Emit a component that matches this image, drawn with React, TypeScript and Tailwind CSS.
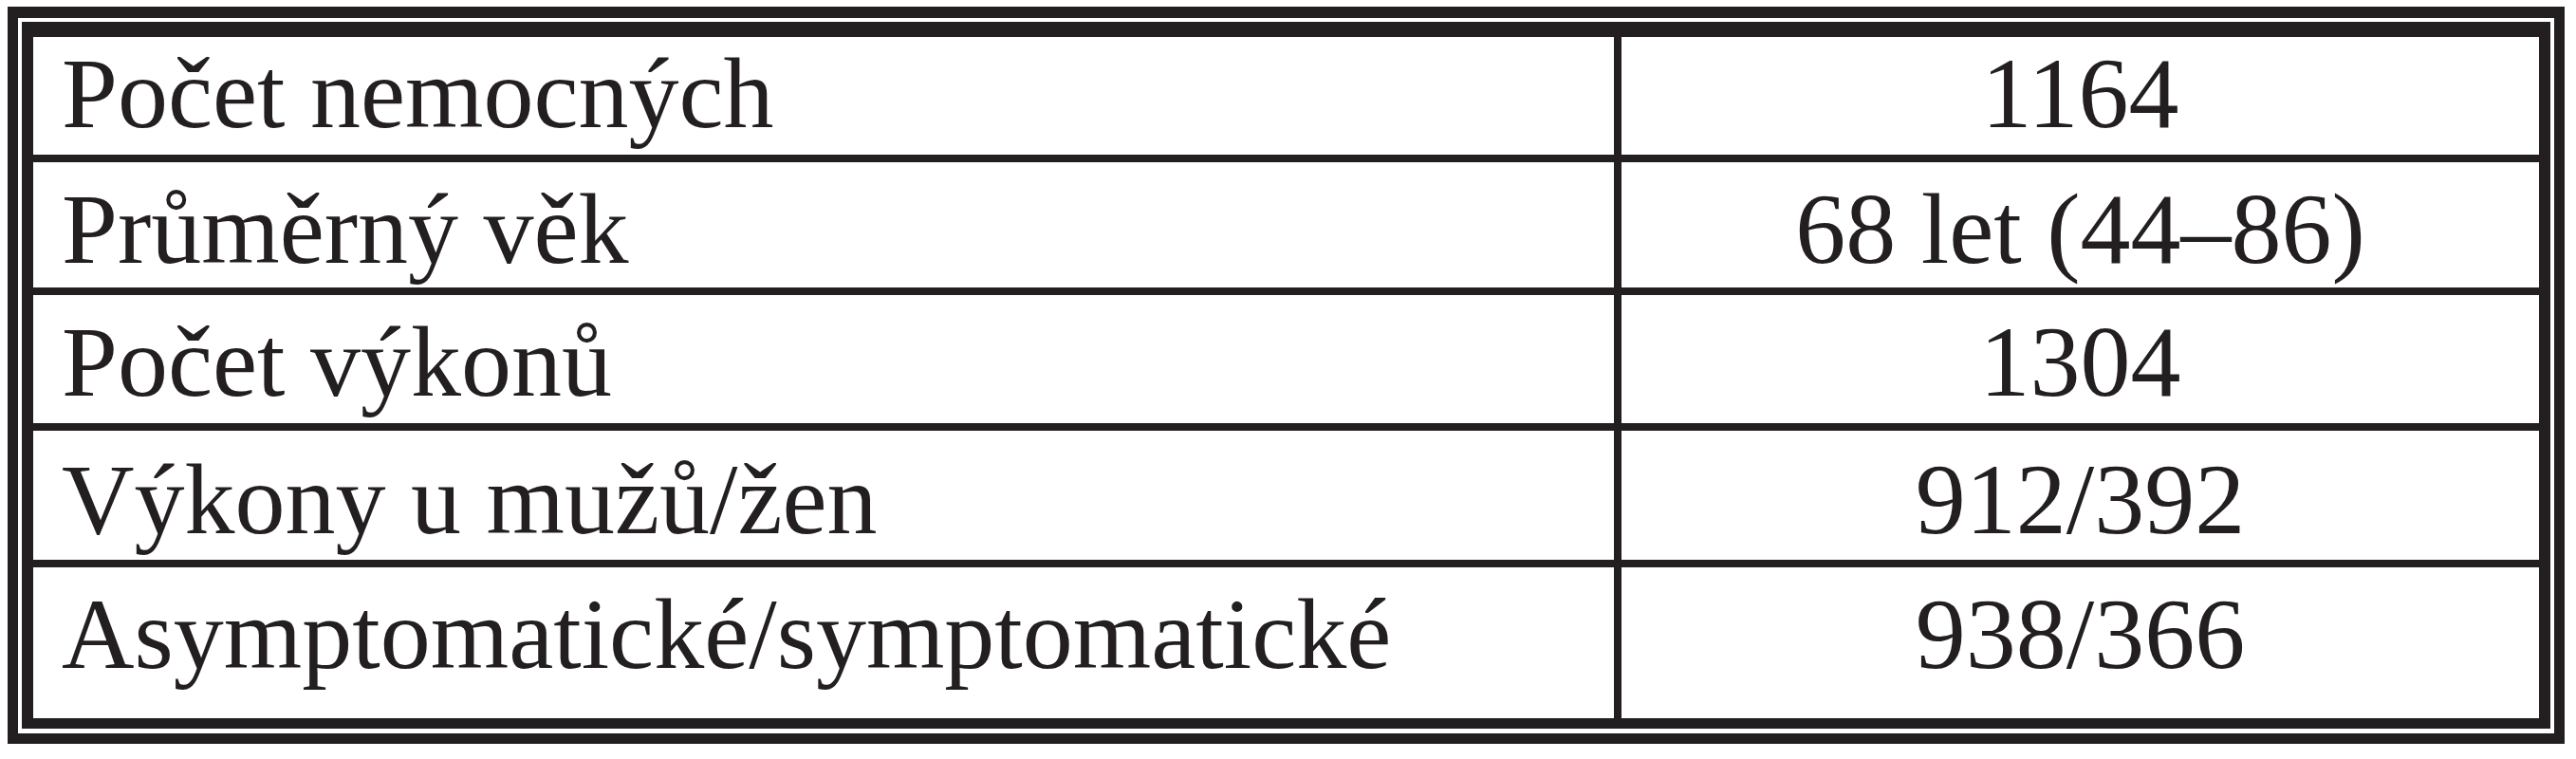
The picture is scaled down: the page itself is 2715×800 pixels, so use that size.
import React from 'react';

type Row = {
  label: string;
  value: string;
  height: string;
  pad: string;
  last?: boolean;
};

// row heights and top paddings measured from the scan, they are not even
const rows: Row[] = [
  { label: 'Počet nemocných', value: '1164', height: 'h-[132px]', pad: 'pt-[7px]' },
  { label: 'Průměrný věk', value: '68 let (44–86)', height: 'h-[140px]', pad: 'pt-[18px]' },
  { label: 'Počet výkonů', value: '1304', height: 'h-[143px]', pad: 'pt-[18px]' },
  { label: 'Výkony u mužů/žen', value: '912/392', height: 'h-[144px]', pad: 'pt-[20px]' },
  { label: 'Asymptomatické/symptomatické', value: '938/366', height: 'h-[159px]', pad: 'pt-[18px]', last: true },
];

const App = () => {
  return (
    <div className="min-h-screen bg-white pt-[7px] pl-[8px] text-[#231f20] font-['Liberation_Serif',serif]">
      {/* Outer frame */}
      <div className="w-[2695px] border-[#231f20] border-t-[12px] border-l-[11px] border-r-[11px] border-b-[11px] pt-[4px] pl-[4px] pr-[4px] pb-[5px] bg-white">
        {/* Inner frame */}
        <div className="border-[#231f20] border-t-[16px] border-l-[12px] border-r-[12px] border-b-[11px] bg-white">
          {rows.map((row) => (
            <div
              key={row.label}
              className={`flex ${row.height} ${row.last ? '' : 'border-b-8 border-[#231f20]'}`}
            >
              <div className={`w-[1674px] shrink-0 border-r-8 border-[#231f20] pl-[30px] ${row.pad}`}>
                <span className="block text-[106px] leading-none whitespace-nowrap">{row.label}</span>
              </div>
              <div className={`flex-1 text-center ${row.pad}`}>
                <span className="block text-[106px] leading-none whitespace-nowrap">{row.value}</span>
              </div>
            </div>
          ))}
        </div>
      </div>
    </div>
  );
};

export default App;
